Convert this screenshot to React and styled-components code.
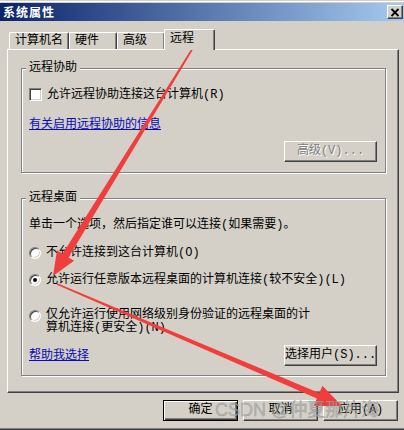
import React from 'react';
import styled, { createGlobalStyle } from 'styled-components';

const GlobalStyle = createGlobalStyle`
  html, body {
    margin: 0;
    padding: 0;
    background: #d4d0c8;
  }
  body {
    font-family: "Liberation Mono", "Noto Sans CJK SC", monospace;
    font-size: 12px;
    color: #000;
  }
`;

const Window = styled.div`
  position: relative;
  width: 404px;
  height: 430px;
  box-sizing: border-box;
  background: #d4d0c8;
  border-top: 1px solid #d4d0c8;
  border-bottom: 1px solid #404040;
  box-shadow: inset 0 1px #fff, inset 0 -1px #808080;
  padding-top: 2px;
  display: flex;
  flex-direction: column;
  overflow: hidden;
`;

const TitleBar = styled.div`
  height: 18px;
  flex: none;
  display: flex;
  align-items: center;
  justify-content: space-between;
  padding: 0 1px 0 3px;
  background: linear-gradient(to right, #0a246a, #a6caf0);
`;

const Title = styled.span`
  color: #fff;
  font-family: "Noto Sans CJK SC", sans-serif;
  font-weight: bold;
  font-size: 12px;
  letter-spacing: 1px;
  line-height: 18px;
`;

const CloseButton = styled.div`
  width: 16px;
  height: 14px;
  box-sizing: border-box;
  background: #d4d0c8;
  border: 1px solid;
  border-color: #fff #404040 #404040 #fff;
  box-shadow: inset -1px -1px #808080;
  display: flex;
  align-items: center;
  justify-content: center;
`;

const Body = styled.div`
  padding: 0 5px 0 7px;
`;

const TabRow = styled.div`
  display: flex;
  align-items: flex-end;
  height: 20px;
  margin-top: 8px;
  padding-left: 2px;
`;

const Tab = styled.div`
  position: relative;
  box-sizing: border-box;
  width: ${p => p.$width}px;
  height: ${p => (p.$active ? 21 : 17)}px;
  margin-bottom: ${p => (p.$active ? -1 : 0)}px;
  margin-left: ${p => (p.$active ? -1 : 0)}px;
  z-index: ${p => (p.$active ? 2 : 1)};
  padding: ${p => (p.$active ? '2px 0 0 5px' : '1px 0 0 5px')};
  background: #d4d0c8;
  border-top: 1px solid #fff;
  border-left: 1px solid #fff;
  border-right: 1px solid #404040;
  border-radius: 2px 2px 0 0;
  box-shadow: inset -1px 0 #808080;
  line-height: 14px;
  white-space: nowrap;
`;

const Panel = styled.div`
  width: 392px;
  box-sizing: border-box;
  border: 1px solid;
  border-color: #fff #404040 #404040 #fff;
  box-shadow: inset -1px -1px #808080;
  padding: 18px 12px 16px 13px;
`;

const Group = styled.div`
  border: 1px solid #808080;
  box-shadow: inset 1px 1px #fff, 1px 1px #fff;
  padding: 0 8px ${p => p.$bottom}px 7px;
  margin-top: ${p => p.$top || 0}px;
`;

const GroupTitle = styled.div`
  width: fit-content;
  margin: -8px 0 0 -3px;
  padding: 0 3px;
  background: #d4d0c8;
  line-height: 14px;
`;

const Text = styled.div`
  line-height: 14px;
  margin-top: ${p => p.$top}px;
  white-space: nowrap;
`;

const OptionRow = styled.div`
  display: flex;
  align-items: flex-start;
  gap: 5px;
  margin-top: ${p => p.$top}px;
`;

const OptionLabel = styled.span`
  line-height: ${p => p.$lh || 14}px;
  width: ${p => (p.$wrap ? '270px' : 'auto')};
  white-space: ${p => (p.$wrap ? 'normal' : 'nowrap')};
`;

const CheckBox = styled.span`
  flex: none;
  width: 13px;
  height: 13px;
  box-sizing: border-box;
  background: #fff;
  border: 1px solid;
  border-color: #808080 #fff #fff #808080;
  box-shadow: inset 1px 1px #404040, inset -1px -1px #d4d0c8;
`;

const Radio = styled.span`
  flex: none;
  position: relative;
  width: 12px;
  height: 12px;
  margin-top: ${p => p.$offset || 1}px;
  box-sizing: border-box;
  border-radius: 50%;
  background: #fff;
  border: 1px solid;
  border-color: #808080 #fff #fff #808080;
  box-shadow: inset 1px 1px #404040, inset -1px -1px #d4d0c8;
  display: flex;
  align-items: center;
  justify-content: center;

  &::after {
    content: '';
    display: ${p => (p.$checked ? 'block' : 'none')};
    width: 4px;
    height: 4px;
    border-radius: 50%;
    background: #000;
  }
`;

const Link = styled.a`
  color: #0a0ab4;
  text-decoration: underline;
  line-height: 14px;
  cursor: pointer;
  white-space: nowrap;
`;

const LinkLine = styled.div`
  margin-top: ${p => p.$top}px;
  line-height: 14px;
`;

const ActionRow = styled.div`
  display: flex;
  align-items: center;
  justify-content: ${p => (p.$split ? 'space-between' : 'flex-end')};
  margin-top: ${p => p.$top}px;
`;

const Button = styled.button`
  font: inherit;
  font-size: 12px;
  width: ${p => p.$width}px;
  height: 21px;
  box-sizing: border-box;
  padding: 0;
  background: #d4d0c8;
  border: 1px solid;
  border-color: ${p => (p.$default ? '#000' : '#fff #404040 #404040 #fff')};
  box-shadow: ${p =>
    p.$default
      ? 'inset 1px 1px #fff, inset -1px -1px #404040, inset -2px -2px #808080'
      : 'inset -1px -1px #808080'};
  color: ${p => (p.disabled ? '#808080' : '#000')};
  text-shadow: ${p => (p.disabled ? '1px 1px #fff' : 'none')};
  line-height: 19px;
  white-space: nowrap;
`;

const ButtonBar = styled.div`
  display: flex;
  justify-content: flex-end;
  gap: 5px;
  margin-top: 7px;
  padding-right: 1px;
`;

const Overlay = styled.svg`
  position: absolute;
  left: 0;
  top: 0;
  pointer-events: none;
`;

const Watermark = styled.div`
  position: absolute;
  left: 215px;
  top: 398px;
  font-family: "Liberation Sans", "Noto Sans CJK SC", sans-serif;
  font-size: 18px;
  line-height: 22px;
  color: rgba(175, 175, 175, 0.7);
  -webkit-text-stroke: 0.4px rgba(100, 100, 100, 0.5);
  pointer-events: none;
  white-space: nowrap;
`;

const arrowPoints = (x0, y0, x1, y1, tw, sw, hl, hw) => {
  const dx = x1 - x0;
  const dy = y1 - y0;
  const len = Math.hypot(dx, dy);
  const ux = dx / len;
  const uy = dy / len;
  const nx = -uy;
  const ny = ux;
  const bx = x1 - ux * hl;
  const by = y1 - uy * hl;
  const pts = [
    [x0 + (nx * tw) / 2, y0 + (ny * tw) / 2],
    [bx + (nx * sw) / 2, by + (ny * sw) / 2],
    [bx + nx * hw, by + ny * hw],
    [x1, y1],
    [bx - nx * hw, by - ny * hw],
    [bx - (nx * sw) / 2, by - (ny * sw) / 2],
    [x0 - (nx * tw) / 2, y0 - (ny * tw) / 2],
  ];
  return pts.map(p => p.map(v => v.toFixed(1)).join(',')).join(' ');
};

const tabs = [
  { label: '计算机名', width: 60 },
  { label: '硬件', width: 48 },
  { label: '高级', width: 48 },
  { label: '远程', width: 51, active: true },
];

const App = () => (
  <>
    <GlobalStyle />
    <Window>
      <TitleBar>
        <Title>系统属性</Title>
        <CloseButton>
          <svg width="10" height="9" viewBox="0 0 10 9">
            <path d="M1.5 1 L8.5 8 M8.5 1 L1.5 8" stroke="#000" strokeWidth="1.8" />
          </svg>
        </CloseButton>
      </TitleBar>

      <Body>
        <TabRow>
          {tabs.map(t => (
            <Tab key={t.label} $width={t.width} $active={t.active}>
              {t.label}
            </Tab>
          ))}
        </TabRow>

        <Panel>
          <Group $bottom={10}>
            <GroupTitle>远程协助</GroupTitle>
            <OptionRow $top={13}>
              <CheckBox />
              <OptionLabel>允许远程协助连接这台计算机(R)</OptionLabel>
            </OptionRow>
            <LinkLine $top={16}>
              <Link>有关启用远程协助的信息</Link>
            </LinkLine>
            <ActionRow $top={9}>
              <Button $width={93} disabled>高级(V)...</Button>
            </ActionRow>
          </Group>

          <Group $top={25} $bottom={9}>
            <GroupTitle>远程桌面</GroupTitle>
            <Text $top={13}>单击一个选项，然后指定谁可以连接(如果需要)。</Text>
            <OptionRow $top={14}>
              <Radio />
              <OptionLabel>不允许连接到这台计算机(O)</OptionLabel>
            </OptionRow>
            <OptionRow $top={13}>
              <Radio $checked />
              <OptionLabel>允许运行任意版本远程桌面的计算机连接(较不安全)(L)</OptionLabel>
            </OptionRow>
            <OptionRow $top={22}>
              <Radio $offset={0} />
              <OptionLabel $wrap $lh={13}>
                仅允许运行使用网络级别身份验证的远程桌面的计算机连接(更安全)(N)
              </OptionLabel>
            </OptionRow>
            <ActionRow $top={10} $split>
              <Link>帮助我选择</Link>
              <Button $width={93}>选择用户(S)...</Button>
            </ActionRow>
          </Group>
        </Panel>

        <ButtonBar>
          <Button $width={75} $default>确定</Button>
          <Button $width={75}>取消</Button>
          <Button $width={75}>应用(A)</Button>
        </ButtonBar>
      </Body>

      <Overlay width="404" height="430" viewBox="0 0 404 430">
        <polygon points={arrowPoints(196, 42, 53, 275, 1.5, 7, 24, 10)} fill="#f23d3d" />
        <polygon points={arrowPoints(57, 283, 342, 405, 1.5, 6, 26, 11)} fill="#f23d3d" />
      </Overlay>
      <Watermark>CSDN @仲夏那片海</Watermark>
    </Window>
  </>
);

export default App;
